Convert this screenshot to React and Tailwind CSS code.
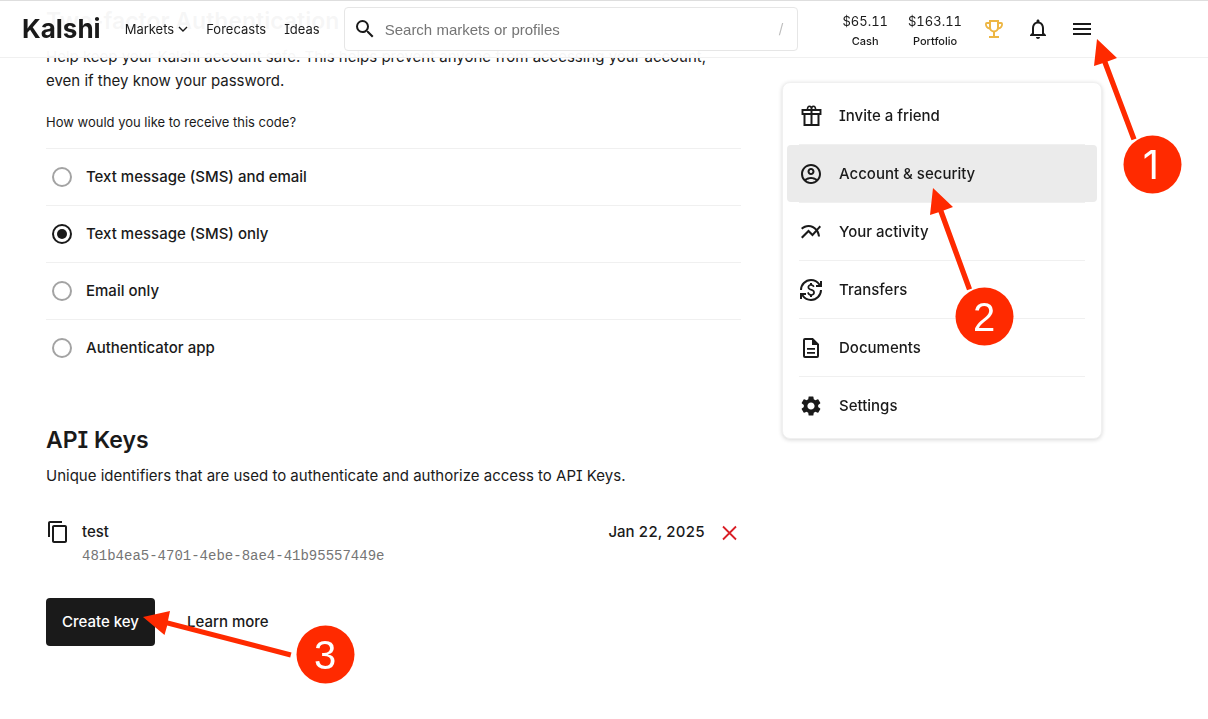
import React from "react";
import {
  MdSearch,
  MdNotificationsNone,
  MdMenu,
  MdOutlineAccountCircle,
  MdMultilineChart,
  MdCurrencyExchange,
  MdSettings,
  MdContentCopy,
} from "react-icons/md";

function GiftIcon({ className }) {
  return (
    <svg viewBox="0 0 24 24" className={className} fill="none" stroke="currentColor" strokeWidth="2" aria-hidden="true">
      <path d="M3.500 6h18v4h-18z" strokeWidth="1.900" />
      <path d="M5.500 10v11h14V10" strokeWidth="2" />
      <path d="M12.500 6v15" strokeWidth="2" />
      <path strokeWidth="1.600" d="M8.500 5.800C8.300 3.500 9.200 2.200 10.600 2.200c1.200 0 1.900 1.200 1.900 3.400 0-2.200.7-3.400 1.900-3.400 1.400 0 2.300 1.300 2.100 3.600" />
    </svg>
  );
}

function TrophyIcon({ className }) {
  return (
    <svg viewBox="0 0 24 24" className={className} fill="none" stroke="currentColor" strokeWidth="2" aria-hidden="true">
      <path d="M8 4h8v6.500a4 4 0 0 1-8 0zM12 14.500V20M7 20h10" />
      <path strokeWidth="1.800" d="M8 6H4.900a1 1 0 0 0-1 1c0 2.500 1.600 4.300 4.300 4.600M16 6h3.100a1 1 0 0 1 1 1c0 2.500-1.600 4.300-4.300 4.600" />
    </svg>
  );
}

function DocumentIcon({ className }) {
  return (
    <svg viewBox="0 0 24 24" className={className} aria-hidden="true">
      <path fill="none" stroke="currentColor" strokeWidth="2" d="M13.500 3H6a1 1 0 0 0-1 1v16a1 1 0 0 0 1 1h12a1 1 0 0 0 1-1V8.500z" />
      <path fill="currentColor" d="M13 2.500V9h6.500zM8 12h8v1.800H8zM8 16h8v1.800H8z" />
    </svg>
  );
}

const menuItems = [
  { label: "Invite a friend", Icon: GiftIcon },
  { label: "Account & security", Icon: MdOutlineAccountCircle, active: true },
  { label: "Your activity", Icon: MdMultilineChart },
  { label: "Transfers", Icon: MdCurrencyExchange },
  { label: "Documents", Icon: DocumentIcon },
  { label: "Settings", Icon: MdSettings },
];

const codeOptions = [
  { id: "sms-email", label: "Text message (SMS) and email" },
  { id: "sms", label: "Text message (SMS) only" },
  { id: "email", label: "Email only" },
  { id: "app", label: "Authenticator app" },
];

function Balance({ amount, label }) {
  return (
    <a href="#portfolio" className="flex flex-col items-center pt-[3px]">
      <span className="text-[13px] leading-5 tabular-nums">{amount}</span>
      <span className="text-[11px] leading-5 font-medium">{label}</span>
    </a>
  );
}

function AccountMenu() {
  return (
    <nav
      aria-label="Account"
      className="absolute top-[82px] right-[106px] w-80 rounded-lg border border-[#f0f0f0] bg-white p-1 shadow-[0_1px_4px_rgba(0,0,0,0.16)]"
    >
      {menuItems.map(({ label, Icon, active }, i) => (
        <React.Fragment key={label}>
          {i > 0 && <hr className="mx-3 border-[#f0f0f0]" />}
          <a
            href="#account"
            className={
              active
                ? "flex items-center gap-4 rounded-sm bg-[#ebebeb] px-3 pt-[17px] pb-4"
                : "flex items-center gap-4 px-3 pt-[17px] pb-4"
            }
          >
            <Icon className="size-6 shrink-0" />
            <span className="text-[15px] leading-6 font-medium">{label}</span>
          </a>
        </React.Fragment>
      ))}
    </nav>
  );
}

function Header() {
  return (
    <header className="fixed inset-x-0 top-0 z-10">
      <div className="flex h-[58px] items-center border-t border-b border-t-[#dedede] border-b-[#f0f0f0] bg-white/96 pr-[114px] pl-[22px]">
        <a href="#home" className="mr-6 text-[26px] leading-8 font-bold">Kalshi</a>
        <nav aria-label="Main" className="mr-6 flex items-center gap-[18px] text-[13px] leading-6">
          <button type="button" className="flex items-center gap-1">
            Markets
            <svg viewBox="0 0 10 10" className="size-2.5" fill="none" stroke="currentColor" strokeWidth="1.4" aria-hidden="true">
              <path d="M1 3l4 4 4-4" />
            </svg>
          </button>
          <a href="#forecasts">Forecasts</a>
          <a href="#ideas">Ideas</a>
        </nav>
        <label className="flex h-11 flex-1 items-center rounded border border-[#e6e6e6] bg-white pr-3.5 pl-2">
          <MdSearch className="size-6 shrink-0" />
          <input
            type="search"
            aria-label="Search markets or profiles"
            placeholder="Search markets or profiles"
            className="ml-2 h-6 min-w-0 flex-1 bg-transparent font-['Liberation_Sans',sans-serif] text-[15px] outline-none placeholder:text-[#757575]"
          />
          <span className="text-sm text-[#bdbdbd]">/</span>
        </label>
        <div className="ml-11 flex items-center gap-5">
          <Balance amount="$65.11" label="Cash" />
          <Balance amount="$163.11" label="Portfolio" />
          <button type="button" aria-label="Leaderboard" className="text-[#edb644]">
            <TrophyIcon className="size-6" />
          </button>
          <button type="button" aria-label="Notifications"><MdNotificationsNone className="size-6" /></button>
          <button type="button" aria-label="Menu"><MdMenu className="size-6" /></button>
        </div>
      </div>
      <AccountMenu />
    </header>
  );
}

function TwoFactor() {
  return (
    <section>
      <h2 className="text-[23px] leading-8 font-semibold">Two-factor Authentication</h2>
      <p className="mt-2 text-[15px] leading-6">
        Help keep your Kalshi account safe. This helps prevent anyone from accessing your account, even if they know your password.
      </p>
      <fieldset className="mt-[19px]">
        <legend className="mb-4 text-[13px] leading-5">How would you like to receive this code?</legend>
        {codeOptions.map(({ id, label }) => (
          <label key={id} htmlFor={id} className="flex h-[57px] items-center border-t border-[#f0f0f0] pl-1.5 text-[15px] font-medium">
            <input
              id={id}
              type="radio"
              name="code"
              defaultChecked={id === "sms"}
              className="mr-3.5 grid size-5 shrink-0 appearance-none place-items-center rounded-full border-2 border-[#a3a3a3] before:size-2.5 before:rounded-full checked:border-[#1a1a1a] checked:before:bg-[#1a1a1a]"
            />
            {label}
          </label>
        ))}
      </fieldset>
    </section>
  );
}

function ApiKeys() {
  return (
    <section className="mt-12">
      <h2 className="text-[23px] leading-8 font-semibold">API Keys</h2>
      <p className="mt-2 text-[15px] leading-6">
        Unique identifiers that are used to authenticate and authorize access to API Keys.
      </p>
      <div className="mt-8 flex items-start">
        <button type="button" aria-label="Copy key" className="mr-3"><MdContentCopy className="size-6" /></button>
        <div className="flex-1">
          <p className="text-[15px] leading-6 font-medium">test</p>
          <p className="font-['Liberation_Mono',monospace] text-sm leading-6 text-[#757575]">481b4ea5-4701-4ebe-8ae4-41b95557449e</p>
        </div>
        <time dateTime="2025-01-22" className="text-[15px] leading-6 font-medium tabular-nums">Jan 22, 2025</time>
        <button type="button" aria-label="Delete key" className="ml-3 text-[#d91f26]">
          <svg viewBox="0 0 24 24" className="size-6" fill="none" stroke="currentColor" strokeWidth="1.8" aria-hidden="true">
            <path d="m6 6.500 13 13m0-13-13 13" />
          </svg>
        </button>
      </div>
      <div className="mt-[30px] flex items-center gap-4">
        <button type="button" className="h-12 rounded bg-[#1a1a1a] px-4 text-[15px] font-medium text-white">Create key</button>
        <a href="#learn" className="px-4 text-[15px] font-medium">Learn more</a>
      </div>
    </section>
  );
}

function Annotations() {
  return (
    <svg width="1208" height="719" viewBox="0 0 1208 719" className="pointer-events-none absolute top-0 left-0 z-20 max-w-none" role="img" aria-label="Steps 1 to 3">
      <g fill="#ff2a00">
        <path d="M1097 39l20 19-9.500 3.500 29 77-5 1.800-29-77-8.500 2.700z" />
        <path d="M933 188l20 19-9.500 3.500 28.500 78-5 1.800-28.500-78-8.500 2.700z" />
        <path d="M143 617l27-6-2 9.500 123.500 32-1.300 5-123-32-2.700 9.500z" />
        <circle cx="1152.500" cy="164.500" r="29" />
        <circle cx="984.500" cy="316.500" r="29" />
        <circle cx="325.500" cy="654.500" r="29" />
      </g>
      <g fill="#fff" textAnchor="middle" className="font-['Liberation_Sans',sans-serif] text-[40px]">
        <text x="1151" y="179" className="font-['Inter',sans-serif]">1</text>
        <text x="984" y="331">2</text>
        <text x="325" y="669">3</text>
      </g>
    </svg>
  );
}

export default function App() {
  return (
    <div className="relative min-h-screen bg-white font-['Inter',sans-serif] text-[#1a1a1a] [font-feature-settings:'cv08']">
      <Header />
      <main className="px-[46px] pt-[5px]">
        <div className="max-w-[695px]">
          <TwoFactor />
          <ApiKeys />
        </div>
      </main>
      <Annotations />
    </div>
  );
}
